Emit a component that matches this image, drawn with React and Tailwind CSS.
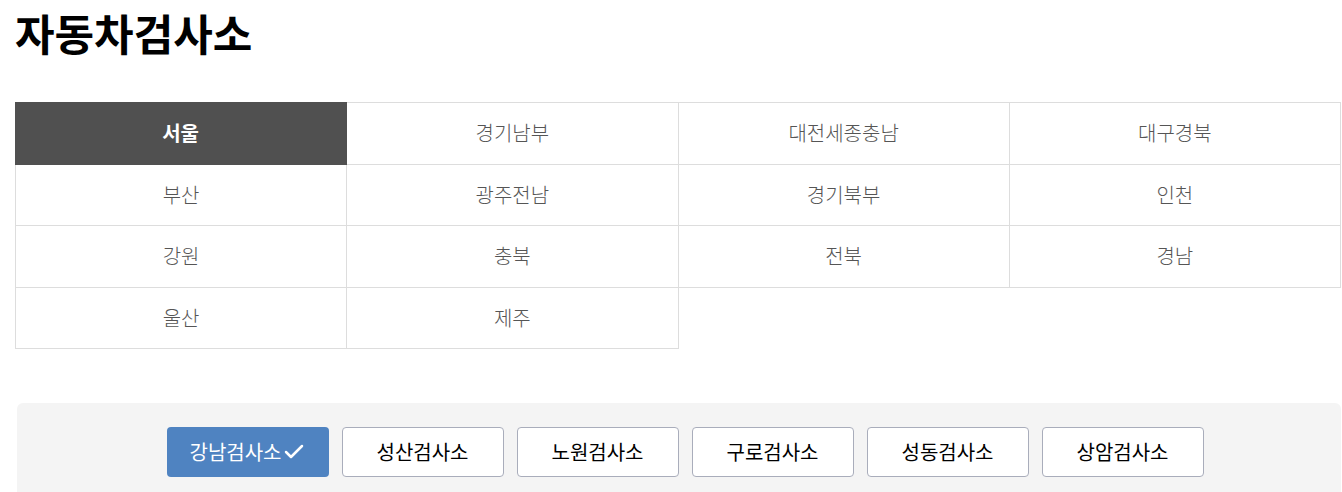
import { Check } from "lucide-react";

const regions = [
  "서울", "경기남부", "대전세종충남", "대구경북",
  "부산", "광주전남", "경기북부", "인천",
  "강원", "충북", "전북", "경남",
  "울산", "제주",
];

const centers = ["강남검사소", "성산검사소", "노원검사소", "구로검사소", "성동검사소", "상암검사소"];

function App() {
  const activeRegion = "서울";
  const activeCenter = "강남검사소";

  return (
    <div className="min-h-screen bg-white pl-[15px] pr-[1px] font-['Noto_Sans_CJK_KR','Noto_Sans',sans-serif]">
      <h1 className="pt-[3px] text-[43px] font-bold leading-[58px] text-black">
        자동차검사소
      </h1>

      <div className="mt-[41px] grid grid-cols-4 border-l border-t border-[#dddddd]">
        {regions.map((name) => {
          const active = name === activeRegion;
          return (
            <div
              key={name}
              className={
                active
                  ? "-ml-px -mt-px flex h-[62.5px] items-center justify-center border-b border-r border-[#505050] bg-[#505050] text-[20px] font-bold text-white"
                  : "flex h-[61.5px] items-center justify-center border-b border-r border-[#dddddd] text-[20px] font-light text-[#555555]"
              }
            >
              {name}
            </div>
          );
        })}
      </div>

      <div className="mt-[54px] ml-[2px] rounded-t-[6px] bg-[#f4f4f4] pt-[24px] pb-[20px]">
        <div className="flex justify-center gap-[13px] pl-[12px]">
          {centers.map((name) => {
            const active = name === activeCenter;
            return (
              <button
                key={name}
                className={
                  active
                    ? "flex h-[50px] w-[162px] items-center justify-center rounded-[4px] bg-[#4f83c1] text-[20px] font-normal text-white"
                    : "flex h-[50px] w-[162px] items-center justify-center rounded-[4px] border border-[#a9adbb] bg-white text-[20px] font-normal text-black"
                }
              >
                {name}
                {active && <Check size={24} strokeWidth={2.5} />}
              </button>
            );
          })}
        </div>
      </div>
    </div>
  );
}

export default App;
